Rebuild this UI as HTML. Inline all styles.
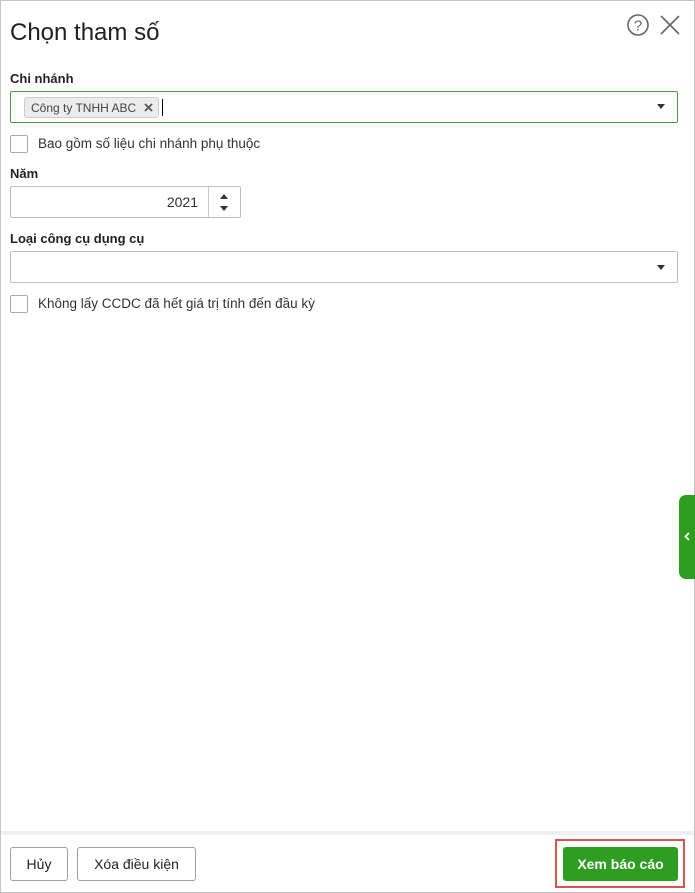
<!DOCTYPE html>
<html><head><meta charset="utf-8"><style>
*{box-sizing:border-box;margin:0;padding:0}
body{width:695px;height:893px;background:#fff;font-family:"Liberation Sans","DejaVu Sans",sans-serif;color:#212121;position:relative;overflow:hidden}
.frame{position:absolute;left:0;top:0;width:695px;height:893px;border:1px solid #c4c4c4}
.abs{position:absolute}
h1{position:absolute;left:10px;top:19px;font-size:24px;font-weight:normal;color:#212121}
.lbl{position:absolute;left:10px;font-size:13px;font-weight:bold;color:#222}
.box{position:absolute;border:1px solid #bdbdbd;border-radius:2px;background:#fff}
.caret{position:absolute;width:0;height:0;border-left:4px solid transparent;border-right:4px solid transparent;border-top:5px solid #333}
.cb{position:absolute;left:10px;width:18px;height:18px;border:1px solid #aaa;border-radius:2px}
.cbt{position:absolute;left:38px;font-size:13.5px;color:#333;white-space:nowrap}
.btn{position:absolute;top:847px;height:34px;border:1px solid #9e9e9e;border-radius:3px;font-size:14px;display:flex;align-items:center;justify-content:center;background:#fff;color:#222}
</style></head><body>
<div class="frame"></div>
<h1>Chọn tham số</h1>
<svg class="abs" style="left:627px;top:13px" width="24" height="24" viewBox="0 0 24 24"><circle cx="11" cy="12" r="10" fill="none" stroke="#666" stroke-width="1.6"/><text x="11" y="17.5" text-anchor="middle" font-size="15" fill="#666" font-family="Liberation Sans">?</text></svg>
<svg class="abs" style="left:660px;top:15px" width="20" height="20" viewBox="0 0 20 20"><path d="M1 1L19 19M19 1L1 19" stroke="#666" stroke-width="1.6"/></svg>
<div class="lbl" style="top:71px">Chi nhánh</div>
<div class="box" style="left:10px;top:91px;width:668px;height:32px;border-color:#4a9a3f"></div>
<div class="abs" style="left:24px;top:97px;width:135px;height:21px;background:#ececec;border:1px solid #ccc;border-radius:3px;font-size:12px;color:#444;padding:0 0 0 6px;white-space:nowrap;display:flex;align-items:center">Công ty TNHH ABC<svg style="margin-left:8px" width="9" height="9" viewBox="0 0 9 9"><path d="M1 1L8 8M8 1L1 8" stroke="#555" stroke-width="1.8"/></svg></div>
<div class="abs" style="left:162px;top:99px;width:1px;height:17px;background:#000"></div>
<div class="caret" style="left:657px;top:104px"></div>
<div class="cb" style="top:135px"></div><div class="cbt" style="top:136px">Bao gồm số liệu chi nhánh phụ thuộc</div>
<div class="lbl" style="top:166px">Năm</div>
<div class="box" style="left:10px;top:186px;width:231px;height:32px"></div>
<div class="abs" style="left:208px;top:187px;width:1px;height:30px;background:#ccc"></div>
<div class="abs" style="left:150px;top:194px;width:48px;text-align:right;font-size:14px;color:#333">2021</div>
<div class="abs" style="left:220px;top:194px;width:0;height:0;border-left:4px solid transparent;border-right:4px solid transparent;border-bottom:5px solid #333"></div>
<div class="caret" style="left:220px;top:206px"></div>
<div class="lbl" style="top:231px">Loại công cụ dụng cụ</div>
<div class="box" style="left:10px;top:251px;width:668px;height:32px"></div>
<div class="caret" style="left:657px;top:265px"></div>
<div class="cb" style="top:295px"></div><div class="cbt" style="top:296px">Không lấy CCDC đã hết giá trị tính đến đầu kỳ</div>
<div class="abs" style="left:679px;top:495px;width:16px;height:84px;background:#2e9e22;border-radius:7px 0 0 7px"></div>
<svg class="abs" style="left:684px;top:532px" width="6" height="9" viewBox="0 0 6 9"><path d="M5 1L1.5 4.5L5 8" fill="none" stroke="#fff" stroke-width="1.8"/></svg>
<div class="abs" style="left:1px;top:831px;width:693px;height:4px;background:#eef0f3"></div>
<div class="btn" style="left:10px;width:58px">Hủy</div>
<div class="btn" style="left:77px;width:119px">Xóa điều kiện</div>
<div class="abs" style="left:555px;top:839px;width:130px;height:49px;border:2px solid #d9534f"></div>
<div class="btn" style="left:563px;width:115px;background:#2e9e22;border-color:#2e9e22;color:#fff;font-weight:bold">Xem báo cáo</div>
</body></html>
